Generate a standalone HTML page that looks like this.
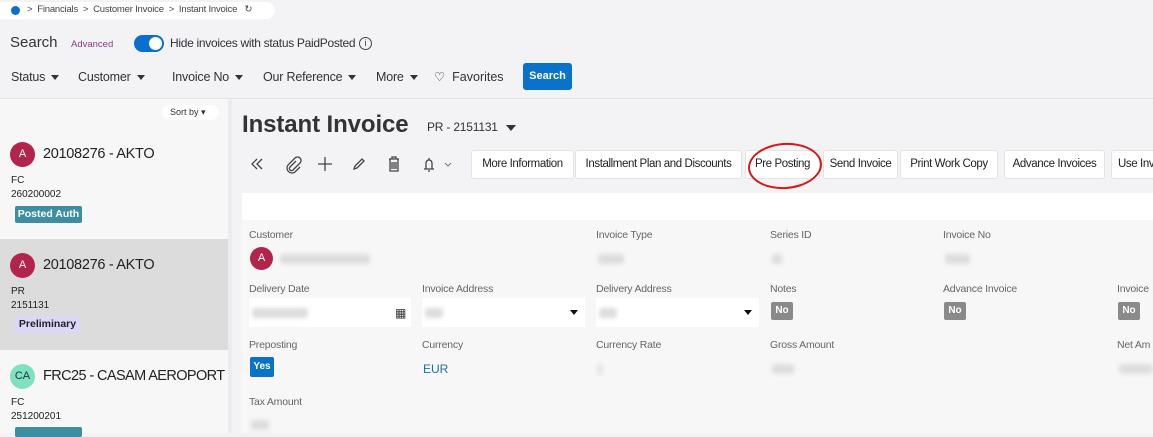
<!DOCTYPE html>
<html><head><style>
*{box-sizing:border-box;margin:0;padding:0}
body{width:1153px;height:433px;overflow:hidden;background:#f3f2f4;font-family:"Liberation Sans",sans-serif;position:relative;color:#333}
.a{position:absolute;white-space:nowrap}
.lbl{position:absolute;font-size:10.5px;color:#666;white-space:nowrap;letter-spacing:-0.2px}
.blur{position:absolute;height:10px;background:#ddd;border-radius:3px;filter:blur(2px)}
.btn{position:absolute;top:150px;height:29px;background:#fff;border:1px solid #e3e3e3;border-radius:3px;font-size:11.5px;line-height:27px;text-align:center;color:#222;white-space:nowrap;overflow:hidden;letter-spacing:-0.4px}
.av{position:absolute;width:25px;height:25px;border-radius:50%;color:#fff;font-size:11px;text-align:center;line-height:25px}
.no{position:absolute;width:22px;height:18px;background:#8a8a8a;color:#fff;font-size:10px;font-weight:bold;text-align:center;line-height:18px;border-radius:2px}
.dd{position:absolute;font-size:12.5px;color:#333;white-space:nowrap;letter-spacing:-0.2px}
.dd:after{content:"";display:inline-block;margin-left:6px;vertical-align:middle;border-left:4.5px solid transparent;border-right:4.5px solid transparent;border-top:5px solid #333}
</style></head><body>
<div class="a" style="left:0;top:2px;width:275px;height:17px;background:#fff;border-radius:0 9px 9px 0"></div>
<div class="a" style="left:11px;top:6px;width:9px;height:9px;border-radius:50%;background:#0a6fd0"></div>
<div class="a" style="left:27px;top:4px;font-size:9.5px;color:#444;letter-spacing:-0.2px">&gt;&nbsp; Financials &nbsp;&gt;&nbsp; Customer Invoice &nbsp;&gt;&nbsp; Instant Invoice &nbsp;&nbsp;&#8635;</div>
<div class="a" style="left:10px;top:34px;font-size:15px;color:#333">Search</div>
<div class="a" style="left:71px;top:39px;font-size:9.5px;color:#8a3b8a">Advanced</div>
<div class="a" style="left:134px;top:35px;width:30px;height:17px;border-radius:9px;background:#0a6fd0"></div>
<div class="a" style="left:149px;top:37px;width:13px;height:13px;border-radius:50%;background:#fff"></div>
<div class="a" style="left:170px;top:36px;font-size:12px;color:#333;letter-spacing:-0.3px">Hide invoices with status PaidPosted</div>
<div class="a" style="left:359px;top:37px;width:13px;height:13px;border-radius:50%;border:1px solid #444;font-size:9px;text-align:center;line-height:11px">i</div>
<div class="dd" style="left:11px;top:70px">Status</div>
<div class="dd" style="left:78px;top:70px">Customer</div>
<div class="dd" style="left:172px;top:70px">Invoice No</div>
<div class="dd" style="left:263px;top:70px">Our Reference</div>
<div class="dd" style="left:376px;top:70px">More</div>
<div class="a" style="left:434px;top:69px;font-size:12.5px">♡ &nbsp;Favorites</div>
<div class="a" style="left:523px;top:63px;width:49px;height:27px;background:#0a72c9;border-radius:3px;color:#fff;font-size:11px;font-weight:bold;text-align:center;line-height:27px">Search</div>
<div class="a" style="left:0;top:98px;width:1153px;height:1px;background:#e4e4e4"></div>
<div class="a" style="left:0;top:99px;width:228px;height:334px;background:#f7f7f7"></div>
<div class="a" style="left:228px;top:99px;width:4px;height:334px;background:#ececec"></div>
<div class="a" style="left:162px;top:105px;width:57px;height:15px;background:#fff;border-radius:8px;font-size:9px;line-height:15px;padding-left:8px;color:#333">Sort by ▾</div>
<div class="av" style="left:10px;top:142px;background:#b3244c">A</div>
<div class="a" style="left:43px;top:146px;font-size:14.5px;color:#222;letter-spacing:-0.3px">20108276 - AKTO</div>
<div class="a" style="left:11px;top:175px;font-size:10px;color:#222">FC</div>
<div class="a" style="left:11px;top:189px;font-size:10px;color:#222">260200002</div>
<div class="a" style="left:15px;top:206px;width:67px;height:17px;background:#3e8ea3;border-radius:2px;color:#fff;font-size:10.5px;font-weight:bold;text-align:center;line-height:17px">Posted Auth</div>
<div class="a" style="left:0;top:239px;width:228px;height:111px;background:#dcdcdc"></div>
<div class="av" style="left:10px;top:253px;background:#b3244c">A</div>
<div class="a" style="left:43px;top:257px;font-size:14.5px;color:#222;letter-spacing:-0.3px">20108276 - AKTO</div>
<div class="a" style="left:11px;top:286px;font-size:10px;color:#222">PR</div>
<div class="a" style="left:11px;top:300px;font-size:10px;color:#222">2151131</div>
<div class="a" style="left:15px;top:316px;width:65px;height:17px;background:#dcd6f7;border-radius:2px;color:#222;font-size:10.5px;font-weight:bold;text-align:center;line-height:17px">Preliminary</div>
<div class="av" style="left:10px;top:364px;background:#7fe0c2;color:#234">CA</div>
<div class="a" style="left:43px;top:368px;font-size:14.5px;color:#222;letter-spacing:-0.6px">FRC25 - CASAM AEROPORT</div>
<div class="a" style="left:11px;top:397px;font-size:10px;color:#222">FC</div>
<div class="a" style="left:11px;top:411px;font-size:10px;color:#222">251200201</div>
<div class="a" style="left:15px;top:427px;width:67px;height:10px;background:#3e8ea3;border-radius:2px"></div>
<div class="a" style="left:242px;top:111px;font-size:24px;font-weight:bold;color:#333;letter-spacing:-0.1px">Instant Invoice</div>
<div class="a" style="left:427px;top:120px;font-size:12px;color:#333;letter-spacing:-0.2px">PR - 2151131</div>
<div class="a" style="left:506px;top:125px;border-left:5px solid transparent;border-right:5px solid transparent;border-top:6px solid #333"></div>
<svg class="a" style="left:248px;top:154px" width="210" height="20" viewBox="0 0 210 20" fill="none" stroke="#444" stroke-width="1.3">
<path d="M9 5l-5 5 5 5M14 5l-5 5 5 5"/>
<path d="M48 7l-6 6a2 2 0 0 0 3 3l7-7a3.5 3.5 0 0 0-5-5l-7 7a5 5 0 0 0 7 7l5-5"/>
<path d="M77 3v14M70 10h14"/>
<path d="M106 15l1-3 7-7 2 2-7 7z"/>
<path d="M141 5h10M144 5V3h4v2M142 5v12h8V5M144 8v7M146 8v7M148 8v7"/>
<path d="M176 15h10M178 15V9a3 3 0 0 1 6 0v6M181 4v2M180 17h2"/>
<path d="M197 9l3 3 3-3" stroke="#777" stroke-width="1"/>
</svg>
<div class="btn" style="left:471px;width:103px">More Information</div>
<div class="btn" style="left:575px;width:167px">Installment Plan and Discounts</div>
<div class="btn" style="left:745px;width:75px">Pre Posting</div>
<div class="btn" style="left:823px;width:75px">Send Invoice</div>
<div class="btn" style="left:900px;width:98px">Print Work Copy</div>
<div class="btn" style="left:1004px;width:101px">Advance Invoices</div>
<div class="btn" style="left:1111px;width:60px;text-align:left;padding-left:6px">Use Inv</div>
<div class="a" style="left:748px;top:143px;width:74px;height:46px;border:2px solid #d41818;border-radius:50%;transform:rotate(-4deg)"></div>
<div class="a" style="left:242px;top:193px;width:911px;height:27px;background:#fff"></div>
<div class="a" style="left:242px;top:220px;width:911px;height:213px;background:#f7f7f7"></div>
<div class="lbl" style="left:249px;top:229px">Customer</div>
<div class="av" style="left:250px;top:247px;width:23px;height:23px;line-height:23px;background:#b3244c">A</div>
<div class="blur" style="left:280px;top:254px;width:90px"></div>
<div class="lbl" style="left:596px;top:229px">Invoice Type</div><div class="blur" style="left:598px;top:254px;width:26px"></div>
<div class="lbl" style="left:770px;top:229px">Series ID</div><div class="blur" style="left:772px;top:254px;width:10px"></div>
<div class="lbl" style="left:943px;top:229px">Invoice No</div><div class="blur" style="left:945px;top:254px;width:25px"></div>
<div class="lbl" style="left:249px;top:283px">Delivery Date</div>
<div class="a" style="left:249px;top:298px;width:162px;height:29px;background:#fff"></div>
<div class="blur" style="left:252px;top:308px;width:56px"></div>
<div class="a" style="left:395px;top:306px;font-size:12px">▦</div>
<div class="lbl" style="left:422px;top:283px">Invoice Address</div>
<div class="a" style="left:422px;top:298px;width:163px;height:29px;background:#fff"></div>
<div class="blur" style="left:425px;top:308px;width:18px"></div>
<div class="a" style="left:570px;top:310px;border-left:4px solid transparent;border-right:4px solid transparent;border-top:5px solid #111"></div>
<div class="lbl" style="left:596px;top:283px">Delivery Address</div>
<div class="a" style="left:596px;top:298px;width:163px;height:29px;background:#fff"></div>
<div class="blur" style="left:599px;top:308px;width:18px"></div>
<div class="a" style="left:744px;top:310px;border-left:4px solid transparent;border-right:4px solid transparent;border-top:5px solid #111"></div>
<div class="lbl" style="left:770px;top:283px">Notes</div><div class="no" style="left:771px;top:302px">No</div>
<div class="lbl" style="left:943px;top:283px">Advance Invoice</div><div class="no" style="left:944px;top:302px">No</div>
<div class="lbl" style="left:1117px;top:283px">Invoice</div><div class="no" style="left:1118px;top:302px">No</div>
<div class="lbl" style="left:249px;top:339px">Preposting</div>
<div class="a" style="left:250px;top:357px;width:24px;height:20px;background:#0a72c9;border-radius:2px;color:#fff;font-size:10px;font-weight:bold;text-align:center;line-height:20px">Yes</div>
<div class="lbl" style="left:422px;top:339px">Currency</div>
<div class="a" style="left:423px;top:362px;font-size:12px;color:#1a6fb0">EUR</div>
<div class="lbl" style="left:596px;top:339px">Currency Rate</div><div class="blur" style="left:598px;top:364px;width:4px"></div>
<div class="lbl" style="left:770px;top:339px">Gross Amount</div><div class="blur" style="left:772px;top:364px;width:22px"></div>
<div class="lbl" style="left:1117px;top:339px">Net Am</div><div class="blur" style="left:1119px;top:364px;width:34px"></div>
<div class="lbl" style="left:249px;top:396px">Tax Amount</div><div class="blur" style="left:251px;top:420px;width:18px"></div>
</body></html>
